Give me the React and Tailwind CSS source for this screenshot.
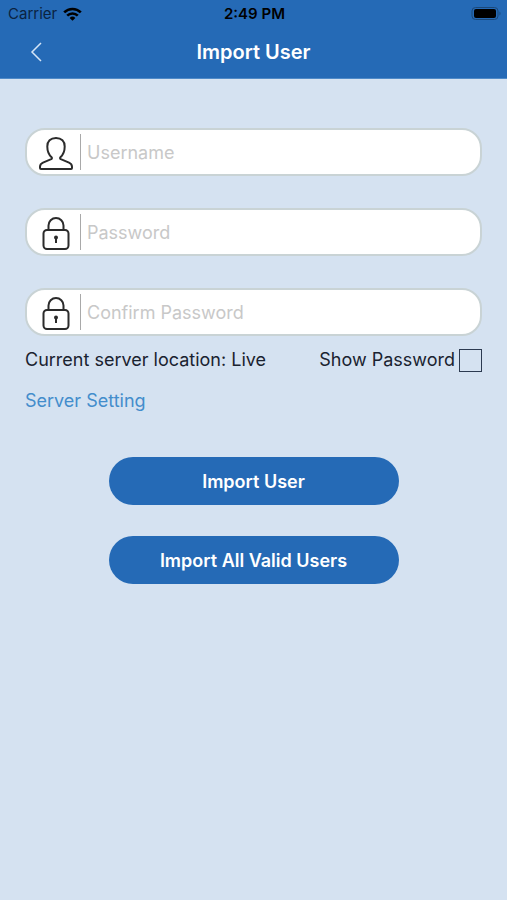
import { useState } from 'react'

function UserIcon() {
    return (
        <svg className="w-9 h-9" viewBox="0 0 36 36" fill="none" stroke="#2b2b2b" strokeWidth="2" strokeLinejoin="round">
            <path d="M18 2C12.500 2 9.300 5.300 9.300 10.500c0 4.400 1.500 8.200 4.300 10.800.6.600.4 1.500-.4 1.900L5 26.600C3 27.500 2 29 2 30.800V32c0 .6.400 1 1 1h30c.6 0 1-.4 1-1v-1.200c0-1.800-1-3.300-3-4.200l-8.200-3.400c-.8-.4-1-1.300-.4-1.900 2.800-2.600 4.300-6.400 4.300-10.800C26.700 5.300 23.500 2 18 2z" />
        </svg>
    )
}

function LockIcon() {
    return (
        <svg className="w-9 h-9" viewBox="0 0 36 36" fill="none" stroke="#2b2b2b" strokeWidth="2">
            <path d="M10.500 14V9.500a7.500 7.500 0 0 1 15 0V14" />
            <rect x="5.500" y="14" width="25" height="19" rx="3.500" />
            <circle cx="18" cy="21.500" r="2" fill="#2b2b2b" stroke="none" />
            <path d="M18 22v5" />
        </svg>
    )
}

function Field({ id, type, placeholder, value, onChange, icon }) {
    return (
        <div className="flex items-center h-12 pl-[11px] pr-4 bg-white border-2 border-[#c9d3d5] rounded-[20px]">
            <label htmlFor={id} aria-label={placeholder} className="pt-1">
                {icon}
            </label>
            <span className="w-px h-9 ml-1.5 bg-[#a9a9a9]" />
            <input
                id={id}
                type={type}
                placeholder={placeholder}
                value={value}
                onChange={onChange}
                className="flex-1 min-w-0 pl-1.5 pt-0.5 text-lg leading-6 text-gray-800 placeholder:text-[#c8c8c8] outline-none"
            />
        </div>
    )
}

function StatusBar() {
    return (
        <div className="grid grid-cols-3 items-center h-7 pl-2 pr-1.5 text-[15px] text-black">
            <div className="flex items-center gap-1.5">
                <span className="text-[#0b2341]">Carrier</span>
                <svg className="w-[19px] h-[14px]" viewBox="0 0 19 14" fill="none" stroke="#000" strokeWidth="2.600">
                    <path d="M1.200 5.400a11.700 11.700 0 0 1 16.600 0" />
                    <path d="M4.200 8.700a7.500 7.500 0 0 1 10.600 0" />
                    <path d="M9.500 13.800 6.600 11a4.100 4.100 0 0 1 5.800 0z" fill="#000" stroke="none" />
                </svg>
            </div>
            <span className="text-center font-semibold">2:49 PM</span>
            <svg className="w-[30px] h-[14px] justify-self-end" viewBox="0 0 30 14">
                <rect x="1" y="0.500" width="26" height="12" rx="3.500" fill="none" stroke="#1b4879" />
                <rect x="3" y="2" width="22" height="9" rx="2" fill="#000" />
                <path d="M28.500 4.500v4c1.300-.6 1.300-3.400 0-4z" fill="#1b4879" />
            </svg>
        </div>
    )
}

export default function App() {
    const [username, setUsername] = useState('')
    const [password, setPassword] = useState('')
    const [confirmPassword, setConfirmPassword] = useState('')
    const [showPassword, setShowPassword] = useState(false)

    const passwordType = showPassword ? 'text' : 'password'

    return (
        <div className="min-h-screen bg-[#d5e2f1] font-[Inter,sans-serif]">
            <header className="bg-[#256ab6] border-b border-[#4f8ac8]">
                <StatusBar />
                <div className="grid grid-cols-[1fr_auto_1fr] items-center h-[50px] pb-0.5 px-7">
                    <button type="button" aria-label="Back" className="w-4">
                        <svg className="w-4 h-5" viewBox="0 0 16 20" fill="none" stroke="#d5e5f7" strokeWidth="1.500">
                            <path d="M13 1 4 10l9 9" />
                        </svg>
                    </button>
                    <h1 className="text-xl font-semibold text-white">Import User</h1>
                </div>
            </header>

            <form className="px-[25px] pt-[49px]" onSubmit={(e) => e.preventDefault()}>
                <div className="flex flex-col gap-8">
                    <Field
                        id="username"
                        type="text"
                        placeholder="Username"
                        value={username}
                        onChange={(e) => setUsername(e.target.value)}
                        icon={<UserIcon />}
                    />
                    <Field
                        id="password"
                        type={passwordType}
                        placeholder="Password"
                        value={password}
                        onChange={(e) => setPassword(e.target.value)}
                        icon={<LockIcon />}
                    />
                    <Field
                        id="confirm-password"
                        type={passwordType}
                        placeholder="Confirm Password"
                        value={confirmPassword}
                        onChange={(e) => setConfirmPassword(e.target.value)}
                        icon={<LockIcon />}
                    />
                </div>

                <div className="flex items-center justify-between mt-3 text-lg leading-6 text-[#1a2230]">
                    <p>Current server location: Live</p>
                    <label className="flex items-center gap-1">
                        Show Password
                        <input
                            type="checkbox"
                            checked={showPassword}
                            onChange={(e) => setShowPassword(e.target.checked)}
                            className="appearance-none w-[23px] h-[23px] border border-[#2c3a50] checked:bg-[#256ab6]"
                        />
                    </label>
                </div>

                <div className="mt-[17px] text-lg leading-6">
                    <a href="#server" className="text-[#438dcc]">
                        Server Setting
                    </a>
                </div>

                <div className="flex flex-col items-center gap-[31px] mt-11">
                    <button type="submit" className="w-[290px] max-w-full h-12 pt-0.5 rounded-full bg-[#256ab6] text-lg leading-6 font-semibold text-white">
                        Import User
                    </button>
                    <button type="button" className="w-[290px] max-w-full h-12 pt-0.5 rounded-full bg-[#256ab6] text-lg leading-6 font-semibold text-white">
                        Import All Valid Users
                    </button>
                </div>
            </form>
        </div>
    )
}
